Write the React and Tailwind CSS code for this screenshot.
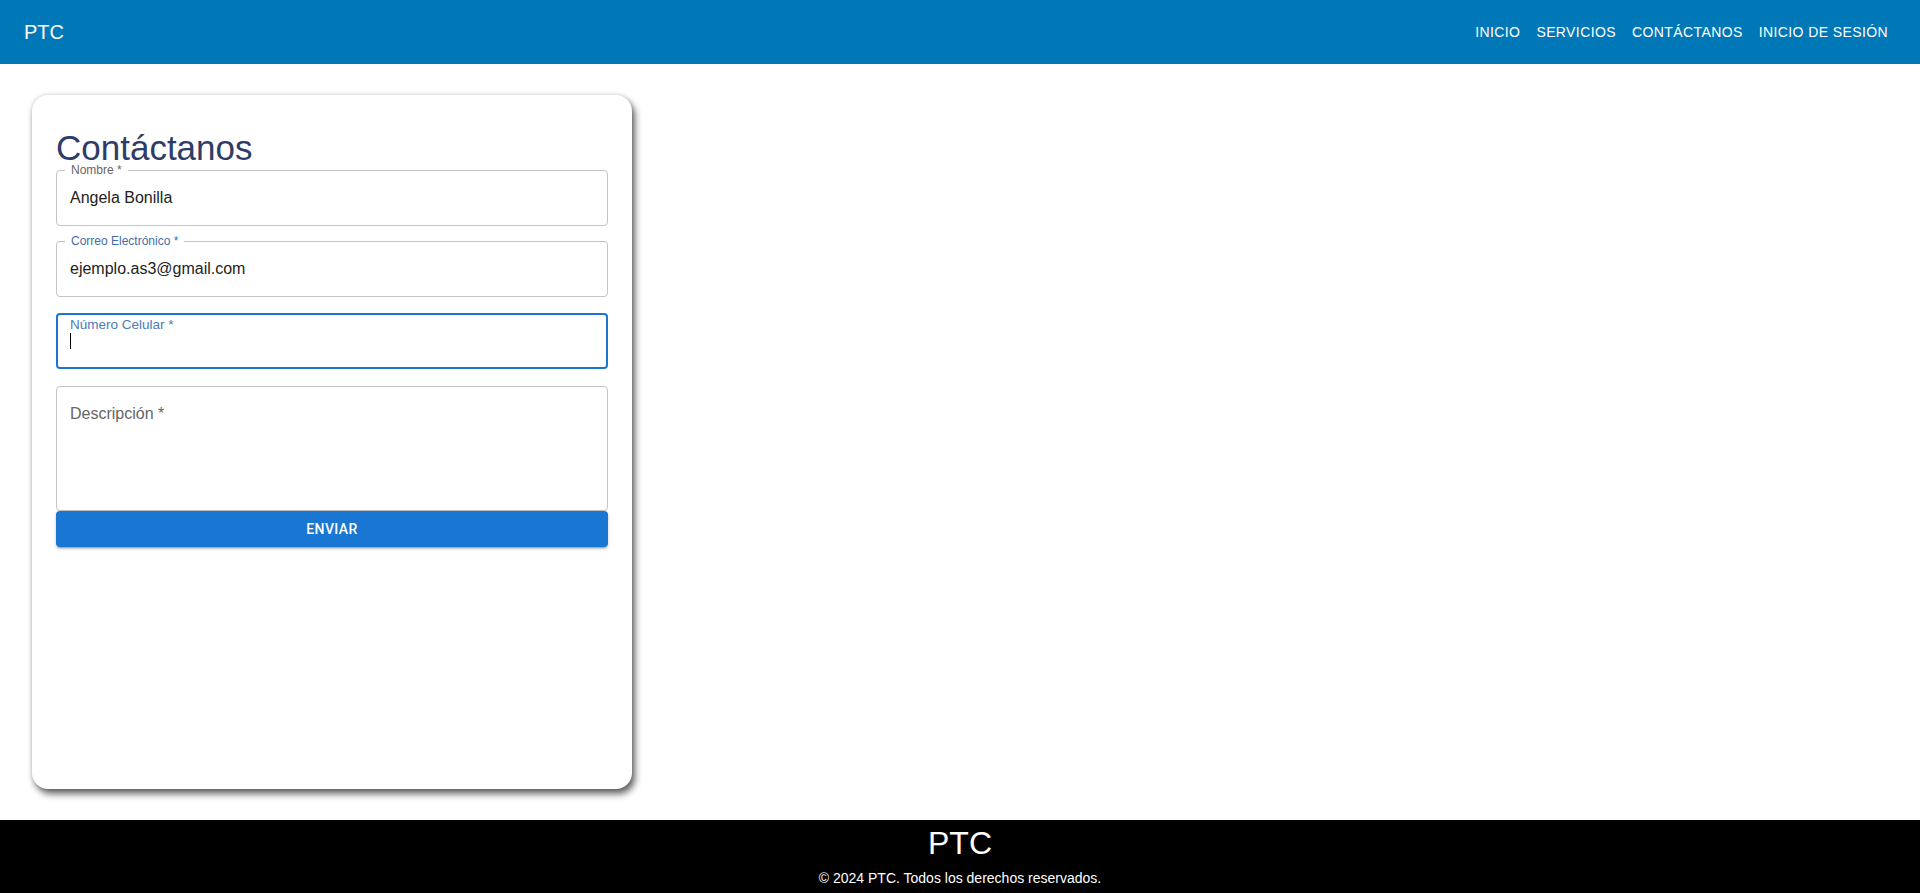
import React from "react";

const NAV_ITEMS = ["Inicio", "Servicios", "Contáctanos", "Inicio de sesión"];

/* =========================
   OUTLINED FIELD (notched label)
   ========================= */
const OutlinedField = ({ label, value, labelColor, className = "" }) => (
    <div className={`relative h-[56px] rounded-[4px] border border-[#c4c4c4] ${className}`}>
        <span
            className={`absolute -top-[8px] left-[8px] bg-white px-[6px] text-[12px] leading-[15px] ${labelColor}`}
        >
            {label}
        </span>
        <div className="px-[13px] pt-[14.5px] text-[16px] leading-[23px] text-[#222]">
            {value}
        </div>
    </div>
);

const App = () => {
    return (
        <div className="min-h-screen flex flex-col bg-white font-['Liberation_Sans',Arial,sans-serif]">
            {/* Header */}
            <header className="h-16 bg-[#0077b6] text-white flex items-center justify-between px-6">
                <span className="text-[20px]">PTC</span>
                <nav className="flex">
                    {NAV_ITEMS.map((item) => (
                        <button
                            key={item}
                            className="px-2 py-1.5 text-[14px] leading-[24px] uppercase tracking-[0.4px]"
                        >
                            {item}
                        </button>
                    ))}
                </nav>
            </header>

            {/* Main */}
            <main className="flex-1 pl-8 py-[31px]">
                <div className="w-[600px] h-[694px] rounded-2xl bg-white px-6 pt-8 shadow-[3px_5px_7px_rgba(0,0,0,0.6),0_0_4px_rgba(0,0,0,0.18)]">
                    <h1 className="text-[35px] leading-[42px] text-[#2e3c68]">Contáctanos</h1>

                    <OutlinedField
                        className="mt-px"
                        label="Nombre *"
                        value="Angela Bonilla"
                        labelColor="text-[#666]"
                    />
                    <OutlinedField
                        className="mt-[15px]"
                        label="Correo Electrónico *"
                        value="ejemplo.as3@gmail.com"
                        labelColor="text-[#3f6ea6]"
                    />

                    {/* Focused field */}
                    <div className="relative mt-4 h-[56px] rounded-[4px] border-2 border-[#1976d2]">
                        <span className="absolute top-[2px] left-[12px] text-[13.5px] leading-[16px] text-[#4a7cb8]">
                            Número Celular *
                        </span>
                        <span className="absolute top-[18px] left-[12px] h-4 w-px bg-black" />
                    </div>

                    <div className="mt-[17px] h-[125px] rounded-[4px] border border-[#c4c4c4] px-[13px] pt-[14.5px]">
                        <span className="text-[16px] leading-[23px] text-[#666]">Descripción *</span>
                    </div>

                    <button className="w-full h-9 rounded-[4px] bg-[#1976d2] text-white text-[14px] font-medium uppercase tracking-[0.4px] font-['Roboto',sans-serif] shadow-[0_3px_1px_-2px_rgba(0,0,0,0.2),0_2px_2px_rgba(0,0,0,0.14),0_1px_5px_rgba(0,0,0,0.12)]">
                        Enviar
                    </button>
                </div>
            </main>

            {/* Footer */}
            <footer className="h-[73px] bg-black text-white text-center pt-1">
                <div className="text-[32px] leading-[38px]">PTC</div>
                <div className="mt-[6px] text-[14px] leading-[20px]">
                    © 2024 PTC. Todos los derechos reservados.
                </div>
            </footer>
        </div>
    );
};

export default App;
